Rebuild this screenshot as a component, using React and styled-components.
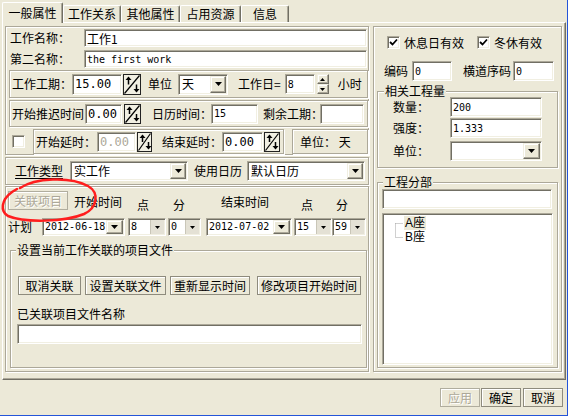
import styled, { createGlobalStyle, css } from "styled-components";

const CJK = `"Noto Sans CJK SC", "DejaVu Sans", sans-serif`;
const MONO = `"DejaVu Sans Mono", "Noto Sans CJK SC", monospace`;

const GlobalStyle = createGlobalStyle`
  html, body { margin: 0; padding: 0; background: #ECE9D8; }
  body { font-family: ${CJK}; font-size: 12px; color: #000; }
  * { box-sizing: border-box; }
`;

const etched = css`
  border: 1px solid #ACA899;
  box-shadow: inset 1px 1px 0 #fff, 1px 1px 0 #fff;
`;

const sunken = css`
  border: 1px solid;
  border-color: #ACA899 #fff #fff #ACA899;
  box-shadow: inset 1px 1px 0 #716F64, inset -1px -1px 0 #F1EFE2;
`;

const raised = css`
  border: 1px solid;
  border-color: #F1EFE2 #716F64 #716F64 #F1EFE2;
  box-shadow: inset -1px -1px 0 #ACA899, inset 1px 1px 0 #fff;
  background: #ECE9D8;
`;

const Window = styled.div`
  position: relative;
  width: 568px;
  height: 416px;
  background: #ECE9D8;
  border-right: 1px solid #2454D8;
  border-bottom: 1px solid #2454D8;
  padding: 2px 0 0 2px;
  font-family: ${CJK};
  font-size: 12px;
  line-height: 14px;
`;

const TabStrip = styled.div`
  display: flex;
  align-items: flex-end;
  height: 20px;
  position: relative;
  z-index: 1;
`;

const Tab = styled.div`
  width: ${(p) => p.$w}px;
  height: ${(p) => (p.$active ? 21 : 17)}px;
  margin-bottom: ${(p) => (p.$active ? -1 : 0)}px;
  border: 1px solid #fff;
  border-right-color: #716F64;
  border-bottom: none;
  border-radius: 2px 2px 0 0;
  box-shadow: inset -1px 0 0 #ACA899;
  background: #ECE9D8;
  display: flex;
  justify-content: center;
  padding-top: ${(p) => (p.$active ? 3 : 1)}px;
`;

const Panel = styled.div`
  width: 564px;
  height: 358px;
  border: 1px solid #fff;
  border-right-color: #716F64;
  border-bottom-color: #716F64;
  box-shadow: inset -1px -1px 0 #ACA899;
  display: flex;
  gap: 3px;
  padding: 3px 0 0 2px;
`;

const LeftCol = styled.div`
  width: 365px;
  display: flex;
  flex-direction: column;
`;

const Frame = styled.div`
  ${etched}
  flex: none;
  width: ${(p) => p.$w}px;
  height: ${(p) => p.$h}px;
  margin: ${(p) => p.$mt ?? 0}px 0 0 ${(p) => p.$ml ?? 0}px;
  padding: ${(p) => p.$pad ?? "0"};
  display: flex;
  flex-direction: ${(p) => (p.$col ? "column" : "row")};
  align-items: ${(p) => (p.$col ? "stretch" : "center")};
`;

const Row = styled.div`
  display: flex;
  align-items: ${(p) => p.$align ?? "center"};
  height: ${(p) => (p.$h ? p.$h + "px" : "auto")};
  margin-top: ${(p) => p.$mt ?? 0}px;
  padding-left: ${(p) => p.$pl ?? 0}px;
`;

const Text = styled.span`
  flex: none;
  width: ${(p) => (p.$w ? p.$w + "px" : "auto")};
  margin: ${(p) => p.$mt ?? 0}px 0 0 ${(p) => p.$ml ?? 0}px;
  white-space: nowrap;
  text-decoration: ${(p) => (p.$u ? "underline" : "none")};
  text-underline-offset: 2px;
`;

const Field = styled.input`
  flex: none;
  width: ${(p) => p.$w}px;
  height: ${(p) => p.$h ?? 20}px;
  margin: 0 0 0 ${(p) => p.$ml ?? 0}px;
  padding: 0 0 0 ${(p) => p.$pl ?? 2}px;
  background: #fff;
  ${sunken}
  font-family: ${(p) => (p.$mono ? MONO : CJK)};
  font-size: ${(p) => p.$fs ?? 12}px;
  color: #000;
  outline: none;
  border-radius: 0;
  &:disabled {
    color: #ACA899;
    background: #fff;
  }
`;

const Btn = styled.button`
  flex: none;
  width: ${(p) => p.$w}px;
  height: 19px;
  margin-left: ${(p) => p.$ml ?? 0}px;
  padding: 0;
  font-family: ${CJK};
  font-size: 12px;
  line-height: 14px;
  background: #ECE9D8;
  border: 1px solid #8E8B7D;
  box-shadow: inset 1px 1px 0 #fff;
  color: #000;
  border-radius: 0;
  &:disabled {
    color: #ACA899;
    text-shadow: 1px 1px 0 #fff;
    border-color: #B0AD9E;
  }
`;

const Check = styled.span`
  flex: none;
  width: 13px;
  height: 13px;
  margin-left: ${(p) => p.$ml ?? 0}px;
  background: #fff;
  ${sunken}
  display: flex;
  align-items: center;
  justify-content: center;
`;

const Combo = styled.div`
  flex: none;
  display: flex;
  width: ${(p) => p.$w}px;
  height: ${(p) => p.$h ?? 20}px;
  margin-left: ${(p) => p.$ml ?? 0}px;
  background: #fff;
  ${sunken}
  padding: 1px;
`;

const ComboText = styled.span`
  flex: 1;
  min-width: 0;
  padding-left: ${(p) => (p.$mono ? 1 : 2)}px;
  display: flex;
  align-items: center;
  font-family: ${(p) => (p.$mono ? MONO : CJK)};
  font-size: ${(p) => (p.$mono ? 10 : 12)}px;
  white-space: nowrap;
  overflow: hidden;
`;

const DropBtn = styled.span`
  flex: none;
  width: ${(p) => p.$w ?? 16}px;
  display: flex;
  align-items: center;
  justify-content: center;
  ${(p) =>
    p.$flat
      ? css`
          background: #E4E1D5;
          border-left: 1px solid #C9C6B8;
        `
      : raised}
`;

const SpinSvg = styled.svg`
  flex: none;
  margin-left: ${(p) => p.$ml ?? 0}px;
  display: block;
`;

const UpDown = styled.div`
  flex: none;
  width: 12px;
  height: 20px;
  margin-left: ${(p) => p.$ml ?? 0}px;
  display: flex;
  flex-direction: column;
`;

const UpDownHalf = styled.span`
  flex: 1;
  ${raised}
  display: flex;
  align-items: center;
  justify-content: center;
`;

const RightCol = styled.div`
  ${etched}
  width: 189px;
  height: 346px;
  padding-top: 8px;
  display: flex;
  flex-direction: column;
`;

const Group = styled.div`
  ${etched}
  flex: none;
  width: ${(p) => p.$w}px;
  height: ${(p) => (p.$h ? p.$h + "px" : "auto")};
  margin: ${(p) => p.$mt ?? 0}px 0 0 ${(p) => p.$ml ?? 0}px;
  padding-bottom: ${(p) => p.$pb ?? 0}px;
  display: flex;
  flex-direction: column;
`;

const Legend = styled.span`
  align-self: flex-start;
  margin: -7px 0 0 ${(p) => p.$ml ?? 5}px;
  padding: 0 1px;
  background: #ECE9D8;
  line-height: 12px;
  height: 12px;
  white-space: nowrap;
`;

const Tree = styled.div`
  flex: none;
  width: ${(p) => p.$w}px;
  height: ${(p) => p.$h}px;
  margin: ${(p) => p.$mt ?? 0}px 0 0 ${(p) => p.$ml ?? 0}px;
  background: #fff;
  ${sunken}
  padding: 2px 0 0 9px;
  display: flex;
  align-items: flex-start;
`;

const TreeItems = styled.div`
  display: flex;
  flex-direction: column;
`;

const TreeItem = styled.span`
  align-self: flex-start;
  height: 14px;
  line-height: 14px;
  padding: 0 1px;
  font-family: "Liberation Sans", "Noto Sans CJK SC", sans-serif;
  background: ${(p) => (p.$sel ? "#ECE9D8" : "transparent")};
`;

const Footer = styled.div`
  display: flex;
  justify-content: flex-end;
  padding: 8px 4px 0 0;
`;

const Annotation = styled.svg`
  position: absolute;
  left: 0;
  top: 170px;
  pointer-events: none;
`;

const Tri = ({ w = 7, h = 4 }) => (
  <svg width={w} height={h} viewBox={`0 0 ${w} ${h}`}>
    <path d={`M0 0H${w}L${w / 2} ${h}Z`} fill="#000" />
  </svg>
);

const TriUp = () => (
  <svg width="5" height="3" viewBox="0 0 5 3">
    <path d="M0 3H5L2.5 0Z" fill="#000" />
  </svg>
);

const Tick = () => (
  <svg width="9" height="9" viewBox="0 0 9 9">
    <path d="M1 4 L3.5 6.5 L8 1.5" fill="none" stroke="#000" strokeWidth="1.8" />
  </svg>
);

const Spin = ({ w = 17, h = 20, ml = 0 }) => {
  const ax = Math.round(w * 0.3) + 0.5;
  const bx = Math.round(w * 0.7) + 0.5;
  return (
    <SpinSvg $ml={ml} width={w} height={h} viewBox={`0 0 ${w} ${h}`}>
      <rect x="0.5" y="0.5" width={w - 1} height={h - 1} fill="#F1EFE2" stroke="#222" />
      <path d={`M1.5 ${h - 1.5} L${w - 1.5} 1.5`} stroke="#000" strokeWidth="1.2" />
      <path d={`M${ax} 2.5 L${ax - 3} 6 H${ax + 3} Z`} fill="#000" />
      <path d={`M${ax} 5.5 V${h / 2}`} stroke="#000" strokeWidth="1.5" />
      <path d={`M${bx} ${h - 2.5} L${bx - 3} ${h - 6} H${bx + 3} Z`} fill="#000" />
      <path d={`M${bx} ${h / 2} V${h - 5.5}`} stroke="#000" strokeWidth="1.5" />
    </SpinSvg>
  );
};

const Drop = ({ w, h, ml, text, mono, flat, bw }) => (
  <Combo $w={w} $h={h} $ml={ml}>
    <ComboText $mono={mono}>{text}</ComboText>
    <DropBtn $flat={flat} $w={bw}>
      {flat ? <Tri w={5} h={3} /> : <Tri />}
    </DropBtn>
  </Combo>
);

export default function App() {
  return (
    <Window>
      <GlobalStyle />
      <TabStrip>
        <Tab $w={61} $active>一般属性</Tab>
        <Tab $w={58}>工作关系</Tab>
        <Tab $w={59}>其他属性</Tab>
        <Tab $w={61}>占用资源</Tab>
        <Tab $w={48}>信息</Tab>
      </TabStrip>
      <Panel>
        <LeftCol>
          <Frame $w={364} $h={129} $col $pad="2px 0 0 4px">
            <Row $h={18}>
              <Text $w={74}>工作名称：</Text>
              <Field $w={283} $h={18} defaultValue="工作1" />
            </Row>
            <Row $h={18} $mt={3}>
              <Text $w={74}>第二名称：</Text>
              <Field $w={283} $h={18} $mono $fs={10} defaultValue="the first work" />
            </Row>
            <Frame $w={359} $h={28} $mt={2} $ml={-1} $pad="0 0 0 2px">
              <Text>工作工期：</Text>
              <Field $w={50} $h={21} $mono defaultValue="15.00" />
              <Spin w={18} h={21} ml={1} />
              <Text $ml={7}>单位</Text>
              <Drop w={50} h={21} ml={6} text="天" />
              <Text $ml={10}>工作日=</Text>
              <Field $w={30} $mono $fs={10} $ml={4} defaultValue="8" />
              <UpDown $ml={2}>
                <UpDownHalf><TriUp /></UpDownHalf>
                <UpDownHalf><Tri w={5} h={3} /></UpDownHalf>
              </UpDown>
              <Text $ml={9}>小时</Text>
            </Frame>
            <Frame $w={359} $h={27} $mt={2} $ml={-1} $pad="0 0 0 2px">
              <Text>开始推迟时间</Text>
              <Field $w={37} $mono $ml={1} defaultValue="0.00" />
              <Spin w={17} h={20} ml={2} />
              <Text $ml={11}>日历时间：</Text>
              <Field $w={47} $mono $fs={10} $ml={-1} defaultValue="15" />
              <Text $ml={5}>剩余工期：</Text>
              <Field $w={44} $ml={-3} defaultValue="" />
            </Frame>
            <Row $h={25} $mt={2}>
              <Check $ml={2} />
              <Frame $w={251} $h={25} $ml={8} $pad="0 0 0 2px">
                <Text>开始延时：</Text>
                <Field $w={39} $mono $ml={1} disabled defaultValue="0.00" />
                <Spin w={15} h={20} ml={1} />
                <Text $ml={10}>结束延时：</Text>
                <Field $w={41} $mono $ml={0} defaultValue="0.00" />
                <Spin w={16} h={20} ml={1} />
              </Frame>
              <Frame $w={76} $h={25} $ml={8} $pad="0 0 0 7px">
                <Text>单位：&nbsp;天</Text>
              </Frame>
            </Row>
          </Frame>

          <Frame $w={364} $h={28} $mt={2} $pad="0 0 0 9px">
            <Text $u>工作类型</Text>
            <Drop w={118} ml={7} text="实工作" />
            <Text $ml={6}>使用日历</Text>
            <Drop w={118} ml={5} text="默认日历" />
          </Frame>

          <Frame $w={364} $h={186} $mt={1} $col $pad="4px 0 0 2px">
            <Row $align="flex-start">
              <Btn $w={60} disabled>关联项目</Btn>
              <Text $ml={6} $mt={4}>开始时间</Text>
              <Text $ml={15} $mt={7}>点</Text>
              <Text $ml={24} $mt={7}>分</Text>
              <Text $ml={36} $mt={4}>结束时间</Text>
              <Text $ml={32} $mt={7}>点</Text>
              <Text $ml={23} $mt={7}>分</Text>
            </Row>
            <Row $h={18} $mt={6}>
              <Text>计划</Text>
              <Drop w={83} h={18} ml={10} text="2012-06-18" mono bw={17} />
              <Drop w={38} h={18} ml={3} text="8" mono flat bw={14} />
              <Drop w={33} h={18} ml={2} text="0" mono flat bw={14} />
              <Drop w={86} h={18} ml={5} text="2012-07-02" mono bw={17} />
              <Drop w={38} h={18} ml={2} text="15" mono flat bw={14} />
              <Drop w={34} h={18} ml={0} text="59" mono flat bw={14} />
            </Row>
            <Group $w={357} $h={118} $mt={14} $ml={2}>
              <Legend $ml={5}>设置当前工作关联的项目文件</Legend>
              <Row $mt={20} $pl={7}>
                <Btn $w={63}>取消关联</Btn>
                <Btn $w={81} $ml={4}>设置关联文件</Btn>
                <Btn $w={80} $ml={4}>重新显示时间</Btn>
                <Btn $w={104} $ml={7}>修改项目开始时间</Btn>
              </Row>
              <Row $mt={12} $pl={6}>
                <Text>已关联项目文件名称</Text>
              </Row>
              <Row $mt={3} $pl={6}>
                <Field $w={345} defaultValue="" />
              </Row>
            </Group>
          </Frame>
        </LeftCol>

        <RightCol>
          <Row $h={15} $pl={13}>
            <Check><Tick /></Check>
            <Text $ml={4}>休息日有效</Text>
            <Check $ml={13}><Tick /></Check>
            <Text $ml={4}>冬休有效</Text>
          </Row>
          <Row $h={20} $mt={11} $pl={10}>
            <Text>编码</Text>
            <Field $w={40} $ml={4} $mono $fs={10} defaultValue="0" />
            <Text $ml={11}>横道序码</Text>
            <Field $w={41} $ml={2} $mono $fs={10} defaultValue="0" />
          </Row>
          <Group $w={181} $mt={10} $ml={3} $pb={6}>
            <Legend $ml={6}>相关工程量</Legend>
            <Row $h={20} $pl={15}>
              <Text $w={57}>数量：</Text>
              <Field $w={92} $mono $fs={10} defaultValue="200" />
            </Row>
            <Row $h={20} $mt={1} $pl={15}>
              <Text $w={57}>强度：</Text>
              <Field $w={92} $mono $fs={10} defaultValue="1.333" />
            </Row>
            <Row $h={20} $mt={3} $pl={15}>
              <Text $w={57}>单位：</Text>
              <Drop w={92} text="" bw={17} />
            </Row>
          </Group>
          <Group $w={181} $mt={14} $ml={3} $pb={2}>
            <Legend $ml={5}>工程分部</Legend>
            <Row $mt={1} $pl={4}>
              <Field $w={170} defaultValue="" />
            </Row>
            <Tree $w={171} $h={152} $mt={4} $ml={4}>
              <svg width="12" height="30" viewBox="0 0 12 30">
                <path d="M3.5 7.5 V21.5 M3.5 7.5 H11 M3.5 21.5 H11" stroke="#A0A0A0" strokeDasharray="1 1" fill="none" />
              </svg>
              <TreeItems>
                <TreeItem $sel>A座</TreeItem>
                <TreeItem>B座</TreeItem>
              </TreeItems>
            </Tree>
          </Group>
        </RightCol>
      </Panel>

      <Footer>
        <Btn $w={40} disabled>应用</Btn>
        <Btn $w={40} $ml={1}>确定</Btn>
        <Btn $w={40} $ml={2}>取消</Btn>
      </Footer>

      <Annotation width="110" height="60" viewBox="0 0 110 60">
        <path
          d="M20 18 C35 8, 70 6, 88 16 C100 23, 97 38, 84 44 C65 52, 25 53, 8 46 C0 41, 1 30, 12 22 L17 19"
          fill="none"
          stroke="#FF1E1E"
          strokeWidth="2.5"
          strokeLinecap="round"
        />
      </Annotation>
    </Window>
  );
}
